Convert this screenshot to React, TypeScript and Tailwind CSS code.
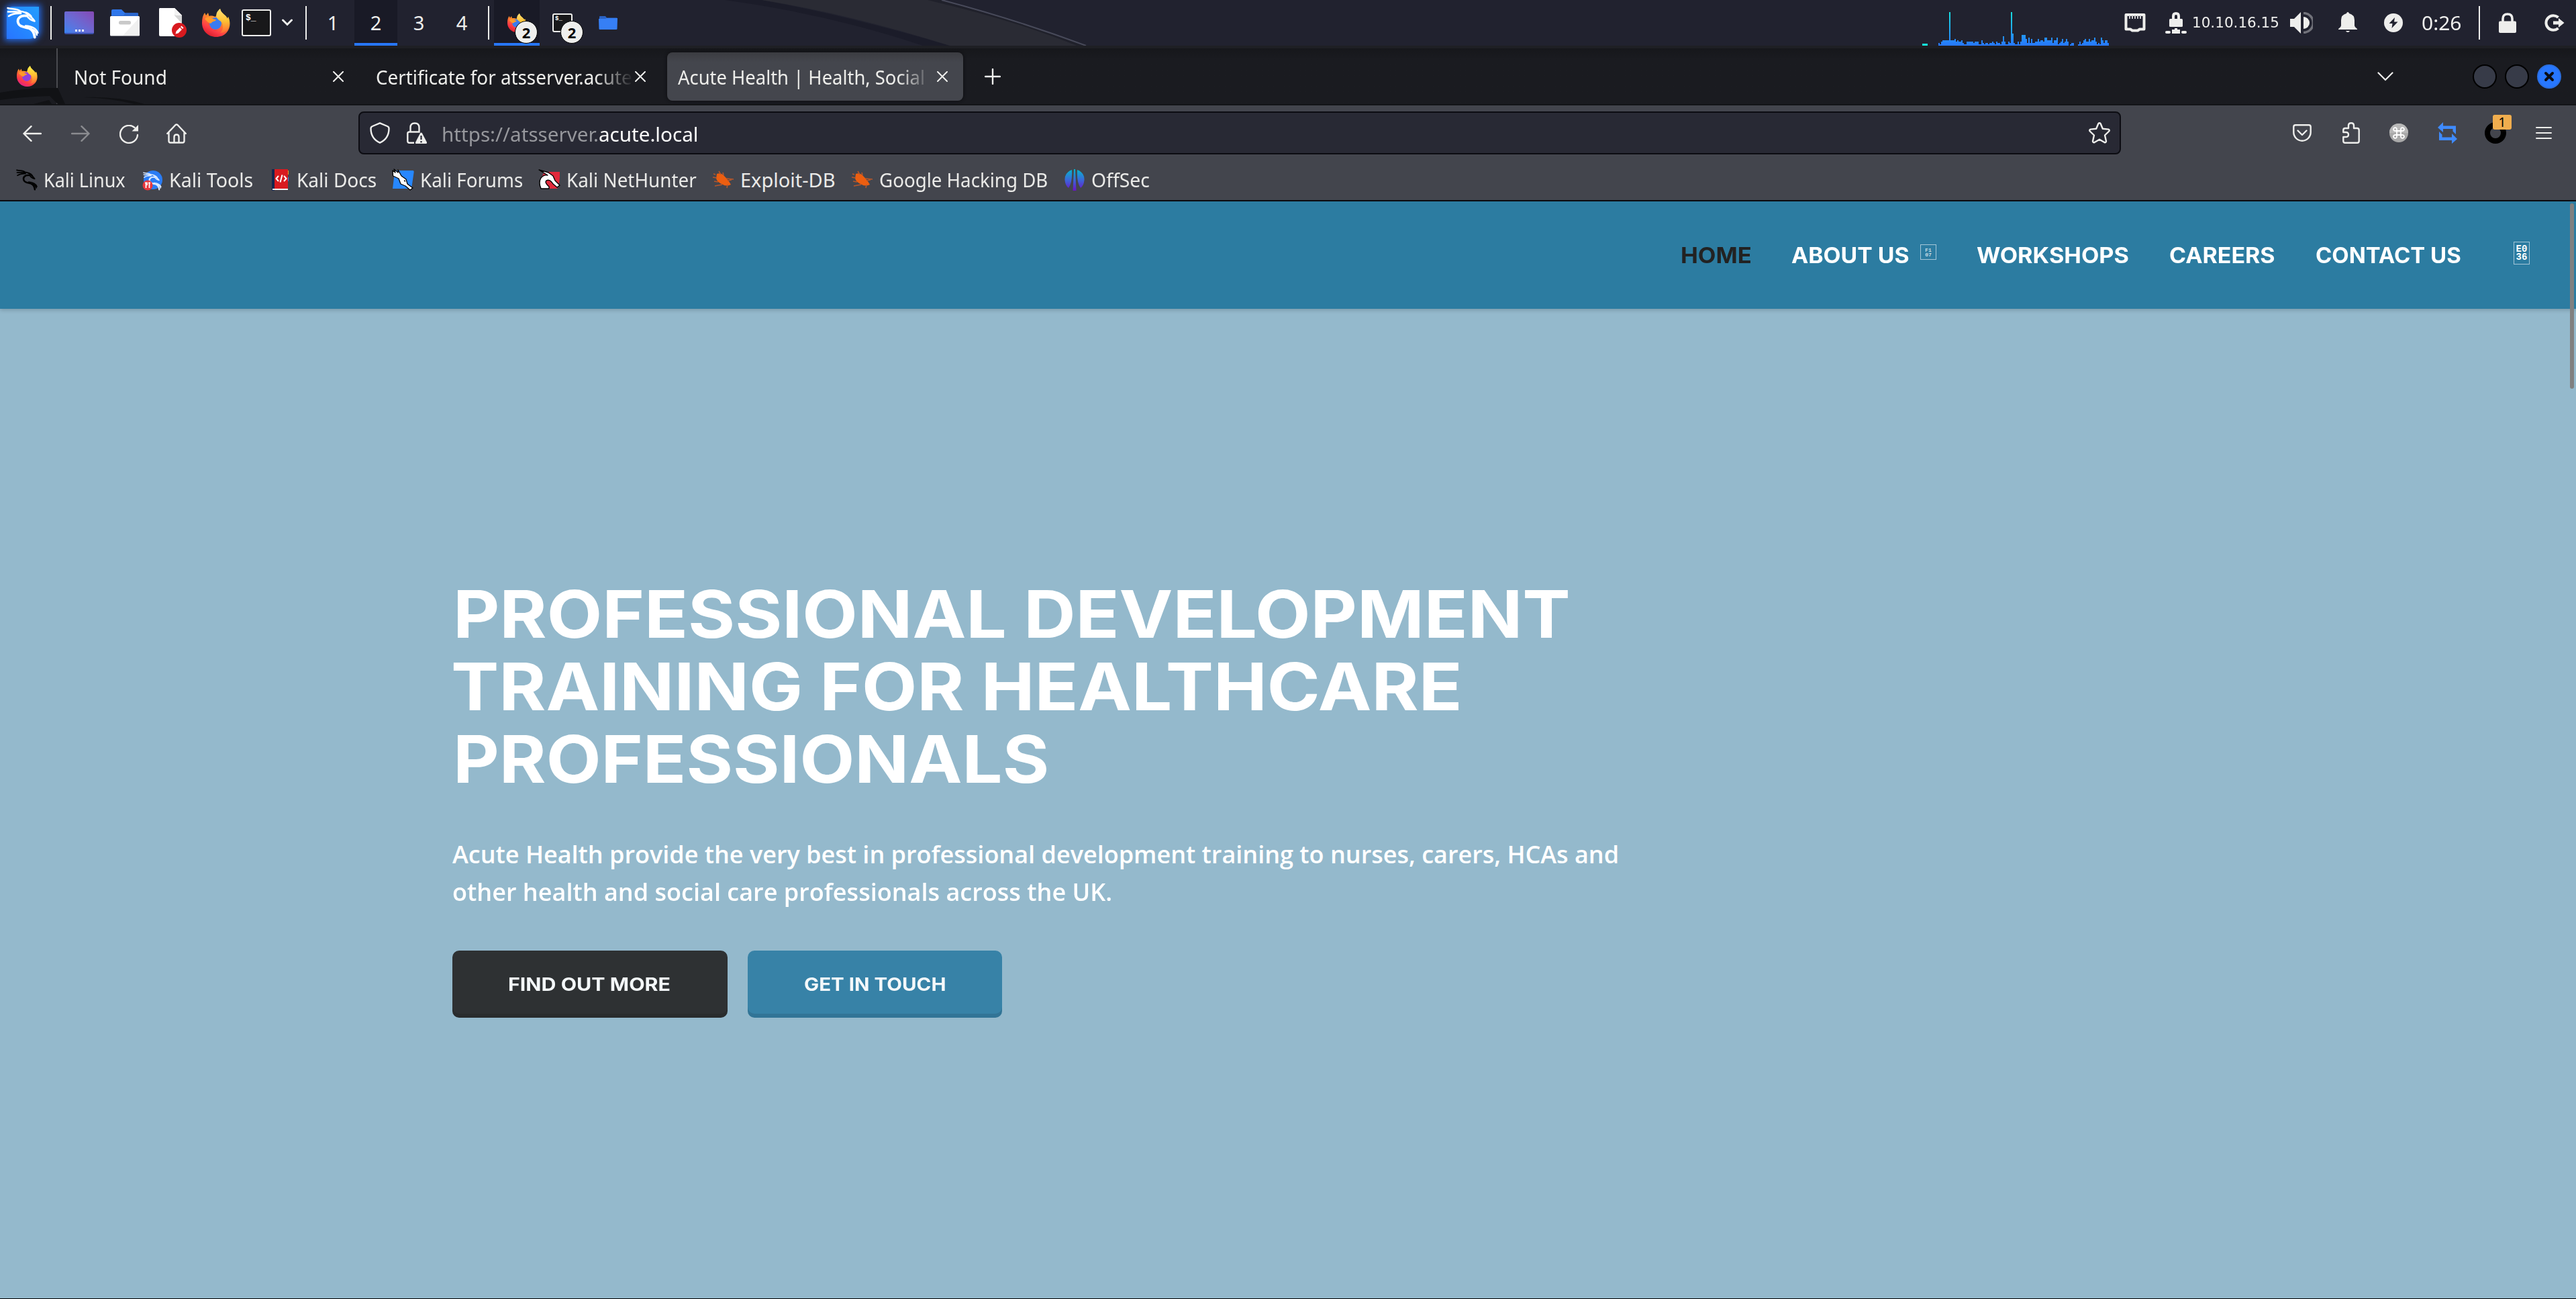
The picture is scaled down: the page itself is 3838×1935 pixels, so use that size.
import React, { useLayoutEffect, useRef, type ReactNode } from "react";

const UI = "font-['Noto_Sans',sans-serif]";
const DISPLAY = "font-['Inter',sans-serif] font-bold";

/** Single line of text stretched or condensed to fill the width of its box. */
function Fit({ className = "", children }: { className?: string; children: ReactNode }) {
  const outer = useRef<HTMLSpanElement>(null);
  const inner = useRef<HTMLSpanElement>(null);
  useLayoutEffect(() => {
    const fit = () => {
      if (!outer.current || !inner.current) return;
      const k = outer.current.clientWidth / inner.current.offsetWidth;
      inner.current.style.transform = `scaleX(${k})`;
    };
    fit();
    document.fonts?.ready.then(fit);
  }, []);
  return (
    <span ref={outer} className={`block shrink-0 whitespace-nowrap ${className}`}>
      <span ref={inner} className="inline-block origin-left">
        {children}
      </span>
    </span>
  );
}

function Dragon() {
  return (
    <g fill="none" stroke="currentColor" strokeLinecap="round" strokeLinejoin="round">
      <path strokeWidth="2.6" d="M1.500 2 C8 4 15 2.500 20 6.500 M2 7.500 C9 8 14 6 21 9 M3 14 C8 10.500 14 9.500 21 10" />
      <path strokeWidth="2.6" d="M21 7 C27 7 31 11 34 13.500 C37 16 40 18.500 41.500 21.500 C37 20.500 33 18 30 13.500 M28 8.500 C32 10 35 12 36.500 14.500" />
      <path strokeWidth="3.800" d="M29 13.500 C20 12.500 15 18 17 24 C19 30.500 27 30 33 32 C38 34 41 39 41.800 45.500" />
      <path strokeWidth="2.400" d="M28 28.500 C37 29 44 32.500 46.500 39 M36 32.500 C41 34.500 44 37 45 42" />
    </g>
  );
}

function Firefox({ id, purple, className }: { id: string; purple?: boolean; className: string }) {
  return (
    <svg viewBox="0 0 42 42" className={className}>
      <defs>
        <linearGradient id={`${id}b`} x1="0.8" y1="0.1" x2="0.3" y2="1">
          <stop offset="0" stopColor="#ffd94a" />
          <stop offset="0.4" stopColor="#ff8a2b" />
          <stop offset="0.75" stopColor="#ff3b47" />
          <stop offset="1" stopColor={purple ? "#e0208a" : "#d81e2c"} />
        </linearGradient>
        <linearGradient id={`${id}f`} x1="0.5" y1="0" x2="0.5" y2="1">
          <stop offset="0" stopColor={purple ? "#fff04a" : "#ffe07a"} />
          <stop offset="0.5" stopColor="#ffc233" />
          <stop offset="1" stopColor="#ff6a36" />
        </linearGradient>
      </defs>
      <path fill={`url(#${id}b)`} d="M27 0 C28 7 36 9 38 15 L39 12 C43 20 42 29 37 35 C33 40 27 42 21 42 C9 42 0 33 0 21 C0 15 1 10 4 6 L6 10 L9 6 L10.500 11 C14 10 17 11 20 12 Z" />
      <circle cx="20" cy="22" r="9" fill={purple ? "#9040dd" : "#3a7bf0"} />
      <path fill={`url(#${id}f)`} d="M27 0 C28 7 36 9 38 15 L39 12 C42 20 41 28 36 33 C33 35 30 36 27 36 C33 31 32 22 27 18 C21 15 18 7 27 0 Z" />
      <path fill="#ff9a2b" d="M4 15 C8 11 13 12 16 15 L21 16.500 C20 19 16 18.500 14.500 20.500 C13 23 10 22 4 15 Z" />
    </svg>
  );
}

function Terminal({ className }: { className: string }) {
  return (
    <div className={`rounded-[3px] border-2 border-[#f0f0ee] bg-[#18181a] font-bold leading-none text-white font-['Liberation_Mono',monospace] ${className}`}>
      $_
    </div>
  );
}

function Bar({ className }: { className: string }) {
  return <div className={`h-[50px] w-[2px] shrink-0 bg-[#eeeeec] ${className}`} />;
}

const LOAD = [
  2, 1, 3, 4, 4, 4, 4, 4, 25, 4, 4, 4, 5, 3, 4, 3, 3, 4, 2, 1, 1, 3, 3, 3, 3, 3, 2, 3, 3, 3, 1, 1, 4, 2, 1, 2, 2, 1, 2, 2,
  3, 2, 1, 3, 2, 2, 1, 3, 7, 3, 1, 1, 3, 2, 25, 9, 2, 1, 1, 3, 1, 3, 8, 8, 8, 5, 2, 6, 2, 5, 2, 2, 3, 3, 5, 3, 4, 4, 3, 6,
  6, 4, 4, 4, 6, 2, 4, 4, 6, 1, 2, 3, 5, 2, 3, 5, 3, 0, 1, 2, 2, 0, 0, 0, 1, 3, 1, 2, 4, 5, 3, 3, 5, 3, 4, 4, 6, 3, 1, 2,
  1, 6, 4, 2, 4, 4, 2,
];

function LoadGraph() {
  return (
    <svg viewBox="0 0 280 68" className="h-[68px] w-[280px] shrink-0" shapeRendering="crispEdges">
      <defs>
        <linearGradient id="load" gradientUnits="userSpaceOnUse" x1="0" y1="68" x2="0" y2="18">
          <stop offset="0" stopColor="#2777ff" />
          <stop offset="1" stopColor="#18dfe0" />
        </linearGradient>
      </defs>
      <rect x="0" y="65" width="8" height="3" fill="#16f2dc" />
      {LOAD.map((v, i) => (
        <rect key={i} x={24 + i * 2} y={68 - v * 2} width="2" height={v * 2} fill="url(#load)" />
      ))}
    </svg>
  );
}

function Badge({ className }: { className: string }) {
  return (
    <span className={`absolute flex size-[34px] items-center justify-center rounded-full border border-black bg-[#eeeeec] text-[22px] font-bold leading-none text-black font-['Noto_Sans',sans-serif] ${className}`}>
      2
    </span>
  );
}

function Panel() {
  return (
    <div className={`relative flex h-[68px] shrink-0 items-center bg-[#21222f] text-[29px] text-[#eeeeec] ${UI}`}>
      <svg viewBox="0 0 600 68" className="absolute left-[1060px] top-0 h-[68px] w-[600px]">
        <path d="M20 0 H75 Q210 25 355 68 H315 Q170 20 20 0Z" fill="#1b1c29" />
        <path d="M75 0 H340 Q450 30 545 68 H355 Q210 22 75 0Z" fill="#2a2b34" />
        <path d="M322 0 H343 Q470 36 557 68 H545 Q450 30 322 0Z" fill="#20212b" />
        <path d="M343 0 Q450 28 558 68" fill="none" stroke="#484a5a" strokeWidth="2" />
      </svg>
      <div className="ml-[10px] size-12 shrink-0 rounded-br-[14px] rounded-tl-[8px] bg-linear-to-tr from-[#2874ff] to-[#249dff] text-white shadow-[0_0_10px_3px_#2467e0]">
        <svg viewBox="0 0 48 48" className="size-12 overflow-visible">
          <Dragon />
        </svg>
      </div>
      <Bar className="ml-[17px]" />
      <div className="ml-[19px] flex h-[34px] w-11 shrink-0 items-end justify-center gap-[2px] rounded-[2px] border-b-2 border-[#3b50ac] bg-linear-to-tr from-[#3584f0] to-[#8548b4] pb-[2px]">
        <i className="size-[3px] bg-white" />
        <i className="size-[3px] bg-white" />
        <i className="size-[3px] bg-white" />
      </div>
      <svg viewBox="0 0 44 40" className="ml-6 h-10 w-11 shrink-0">
        <path d="M2 12 V2 Q2 0 4 0 H17 L22 5 H40 Q42 5 42 7 V12Z" fill="#2f76ea" />
        <path d="M2 12 V9 H20 L23 5 H40 Q42 5 42 7 V12Z" fill="#2a66cc" />
        <rect y="10" width="44" height="29.500" rx="1.500" fill="#fff" />
        <path d="M44 12 V39 H19Z" fill="#f0f0f0" />
        <rect x="13" y="17" width="18" height="5.500" rx="2.500" fill="#c9c9c9" />
      </svg>
      <svg viewBox="0 0 42 44" className="ml-[29px] h-11 w-[42px] shrink-0">
        <path d="M1 0 H23 L34 11 V42 H2 Q0 42 0 40 V1Z" fill="#fff" />
        <path d="M23 0 L34 11 V23 L23 11Z" fill="#d5d5d5" />
        <path d="M23 0 L34 11 H25 Q23 11 23 9Z" fill="#f3f3f3" />
        <circle cx="30" cy="33" r="11" fill="#d81a1f" />
        <path d="M24.500 38.500 L25.500 34.500 L31 29 L34 32 L28.500 37.500Z M32 28 L33.500 26.500 L36.500 29.500 L35 31Z" fill="#fff" />
      </svg>
      <Firefox id="pf" className="ml-[22px] size-[42px] shrink-0" />
      <Terminal className="ml-[17px] h-10 w-11 shrink-0 pl-[4px] pt-[4px] text-[13px]" />
      <svg viewBox="0 0 16 12" className="ml-4 h-3 w-4 shrink-0">
        <path d="M1.500 2 L8 8.500 L14.500 2" fill="none" stroke="#eeeeec" strokeWidth="3" strokeLinecap="round" />
      </svg>
      <Bar className="ml-[19px]" />
      <div className="ml-[7px] flex h-[68px] shrink-0 leading-[68px]">
        <span className="w-16 text-center">1</span>
        <span className="w-16 border-b-4 border-[#2777ff] bg-[#191a26] text-center">2</span>
        <span className="w-16 text-center">3</span>
        <span className="w-16 text-center">4</span>
      </div>
      <Bar className="ml-[7px]" />
      <div className="relative ml-[7px] flex h-[68px] w-[68px] shrink-0 items-center border-b-4 border-[#2777ff] bg-[#191a26] pl-5 pt-1">
        <Firefox id="tf" className="size-7" />
        <Badge className="left-[31px] top-[31px]" />
      </div>
      <div className="relative flex h-[68px] w-[68px] shrink-0 items-center pl-[19px]">
        <Terminal className="h-[28px] w-[30px] pl-[2px] pt-[2px] text-[9px]" />
        <Badge className="left-[31px] top-[31px]" />
      </div>
      <svg viewBox="0 0 28 20" className="ml-5 h-5 w-7 shrink-0">
        <path d="M1 5 V1 Q1 0 2 0 H10 L12 2.500 H27 V6Z" fill="#2a62c4" />
        <path d="M0 4 H10 L12 3 H28 L27.500 19 Q27.500 20 26 20 H2 Q.5 20 .5 19Z" fill="#367ff5" />
      </svg>

      <div className="ml-auto flex items-center">
        <LoadGraph />
        <svg viewBox="0 0 32 28" className="ml-[21px] h-7 w-8 shrink-0">
          <path d="M2.500 2 H29.500 V23.500 H23 L20 25.500 H12 L9 23.500 H2.500Z" fill="none" stroke="#eeeeec" strokeWidth="4" strokeLinejoin="round" />
          <path d="M8 3 V8 M12 3 V8 M16 3 V8 M20 3 V8 M24 3 V8" stroke="#c9c9cc" strokeWidth="2" />
        </svg>
        <svg viewBox="0 0 32 32" className="ml-[29px] size-8 shrink-0" fill="#eeeeec">
          <path d="M12 11 V6 Q12 2 16 2 Q20 2 20 6 V11" fill="none" stroke="#eeeeec" strokeWidth="4" />
          <rect x="6" y="10" width="20" height="12" rx="1.500" />
          <path d="M14 24 H18 V26 H22 V32 H10 V26 H14Z" />
          <rect y="28" width="8" height="4" rx="2" />
          <rect x="24" y="28" width="8" height="4" rx="2" />
        </svg>
        <Fit className="ml-[8px] w-[130px] text-[22px] leading-[62px] font-['DejaVu_Sans',sans-serif]">10.10.16.15</Fit>
        <svg viewBox="0 0 34 32" className="ml-[16px] h-8 w-[34px] shrink-0">
          <path d="M0 10 H6 L16 0 V32 L6 22 H0Z" fill="#eeeeec" />
          <path d="M20 1.500 A14.500 14.500 0 0 1 20 30.500" fill="none" stroke="#71727a" strokeWidth="3.500" />
          <path d="M20 7 A9 9 0 0 1 20 25Z" fill="#eeeeec" />
        </svg>
        <svg viewBox="0 0 28 32" className="ml-[38px] h-8 w-7 shrink-0" fill="#eeeeec">
          <path d="M14 0 Q15.500 0 16 2 Q24 4 24 12 V20 Q24 22 28 25 V26 H0 V25 Q4 22 4 20 V12 Q4 4 12 2 Q12.500 0 14 0Z" />
          <path d="M11 28 H17 Q16 30 14 30 Q12 30 11 28Z" />
        </svg>
        <svg viewBox="0 0 28 28" className="ml-10 size-7 shrink-0">
          <circle cx="14" cy="14" r="14" fill="#eeeeec" />
          <path d="M16 6 L7.500 15 H12.500 L11.500 22 L20.500 12.500 H15Z" fill="#21222f" />
        </svg>
        <Fit className="ml-[28px] w-[60px]">0:26</Fit>
        <Bar className="ml-[25px]" />
        <svg viewBox="0 0 26 30" className="ml-7 h-[30px] w-[26px] shrink-0">
          <path d="M6 14 V9 Q6 2 13 2 Q20 2 20 9 V14" fill="none" stroke="#eeeeec" strokeWidth="3.600" />
          <rect y="12.500" width="26" height="17.500" rx="2" fill="#eeeeec" />
        </svg>
        <svg viewBox="0 0 30 26" className="ml-[42px] mr-[17px] h-[26px] w-[30px] shrink-0">
          <path d="M20.500 5 A10.800 10.800 0 1 0 20.500 21" fill="none" stroke="#eeeeec" strokeWidth="4" />
          <path d="M13 10.500 H21 V6 L29.500 13 L21 20 V15.500 H13Z" fill="#eeeeec" />
        </svg>
      </div>
    </div>
  );
}

function Close({ className }: { className: string }) {
  return (
    <svg viewBox="0 0 16 16" className={`size-4 shrink-0 ${className}`}>
      <path d="M1 1 L15 15 M15 1 L1 15" stroke="#f0f0ee" strokeWidth="2" strokeLinecap="round" />
    </svg>
  );
}

function TabBar() {
  return (
    <div className={`relative flex h-[89px] shrink-0 items-center border-b-2 border-t-4 border-b-[#131417] border-t-[#1e1f24] bg-linear-to-b from-[#16171b] via-[#1a1b20] via-20% to-[#1a1b20] text-[29px] text-[#ededea] ${UI}`}>
      <svg viewBox="0 0 240 24" className="absolute bottom-0 left-0 h-6 w-[240px]">
        <path d="M0 7 Q45 -1 86 0 L97 24 H86 L74 12 Q35 13 0 18Z" fill="#111215" />
        <path d="M50 24 L73 18 L77 24Z" fill="#111215" />
        <path d="M124 14 Q175 12 215 24 H200 Q165 15 124 14Z" fill="#111215" />
      </svg>
      <Firefox id="bf" purple className="ml-[25px] size-[31px] shrink-0" />
      <div className="ml-[28px] h-full w-[2px] shrink-0 bg-[#4a4b50]" />
      <Fit className="ml-[24px] mt-[2px] w-[139px]">Not Found</Fit>
      <Close className="ml-[247px]" />
      <div className="ml-[48px] mt-[2px] w-[384px] shrink-0 overflow-hidden mask-r-from-85% mask-r-to-100%">
        <Fit className="w-[382px]">Certificate for atsserver.acute</Fit>
      </div>
      <Close className="ml-[2px]" />
      <div className="ml-[32px] flex h-[72px] w-[441px] shrink-0 items-center rounded-[8px] bg-linear-to-b from-[#3b3c41] to-[#44464d] to-20% shadow-[0_0_5px_#0c0c0f]">
        <div className="ml-[16px] mt-[2px] w-[386px] shrink-0 overflow-hidden mask-r-from-85% mask-r-to-98%">
          <Fit className="w-[391px]">Acute Health | Health, Social a</Fit>
        </div>
        <Close className="" />
      </div>
      <svg viewBox="0 0 24 24" className="ml-[32px] size-6 shrink-0">
        <path d="M12 1 V23 M1 12 H23" stroke="#f0f0ee" strokeWidth="2.400" strokeLinecap="round" />
      </svg>
      <svg viewBox="0 0 24 14" className="ml-auto h-[14px] w-6 shrink-0">
        <path d="M1.500 1.500 L12 12 L22.500 1.500" fill="none" stroke="#f0f0ee" strokeWidth="2.200" strokeLinecap="round" />
      </svg>
      <div className="ml-[118px] size-9 shrink-0 rounded-full border-2 border-black bg-[#373b48]" />
      <div className="ml-3 size-9 shrink-0 rounded-full border-2 border-black bg-[#373b48]" />
      <div className="ml-3 mr-[22px] flex size-9 shrink-0 items-center justify-center rounded-full border-2 border-[#2b6fe0] bg-[#2777ff]">
        <svg viewBox="0 0 16 16" className="size-4">
          <path d="M3 3 L13 13 M13 3 L3 13" stroke="#0b0d14" strokeWidth="4" strokeLinecap="round" />
        </svg>
      </div>
    </div>
  );
}

function Toolbar() {
  return (
    <div className={`flex h-[82px] shrink-0 items-center text-[29px] text-[#eeeeec] ${UI}`}>
      <svg viewBox="0 0 28 24" className="ml-[34px] mt-[2px] h-6 w-7 shrink-0" fill="none" stroke="#eeeeec" strokeWidth="2.400" strokeLinecap="round" strokeLinejoin="round">
        <path d="M12.500 1.200 L1.500 12 L12.500 22.800 M1.500 12 H27" />
      </svg>
      <svg viewBox="0 0 28 24" className="ml-[44px] mt-[2px] h-6 w-7 shrink-0" fill="none" stroke="#8b8c90" strokeWidth="2.400" strokeLinecap="round" strokeLinejoin="round">
        <path d="M15.500 1.200 L26.500 12 L15.500 22.800 M26.500 12 H1" />
      </svg>
      <svg viewBox="0 0 28 28" className="ml-[44px] mt-1 size-7 shrink-0">
        <path d="M22.500 4 A13 13 0 1 0 27 15" fill="none" stroke="#eeeeec" strokeWidth="2.400" strokeLinecap="round" />
        <path d="M28 0 V9.500 H18.500Z" fill="#eeeeec" />
      </svg>
      <svg viewBox="0 0 30 30" className="ml-[42px] mt-[2px] size-[30px] shrink-0" fill="none" stroke="#eeeeec" strokeWidth="2.400" strokeLinecap="round" strokeLinejoin="round">
        <path d="M1.200 15 L13.500 2 Q15 .8 16.500 2 L28.800 15 M3.500 13 V26 Q3.500 28.500 6 28.500 H24 Q26.500 28.500 26.500 26 V13 M11.500 28.500 V20 Q11.500 16.500 15 16.500 Q18.500 16.500 18.500 20 V28.500" />
      </svg>
      <div className="ml-[256px] flex h-16 w-[2626px] shrink-0 items-center rounded-[8px] border-2 border-[#0c0c12] bg-[#282934]">
        <svg viewBox="0 0 30 32" className="ml-[15px] h-8 w-[30px] shrink-0" fill="none" stroke="#eeeeec" strokeWidth="2.400" strokeLinejoin="round">
          <path d="M15 1.300 L26 6 Q28.500 7 28.500 9.500 C28.500 19 24 26.500 15 30.700 C6 26.500 1.500 19 1.500 9.500 Q1.500 7 4 6Z" />
        </svg>
        <svg viewBox="0 0 30 32" className="ml-[25px] h-8 w-[30px] shrink-0">
          <path d="M5.500 14 V8 Q5.500 1.500 12 1.500 Q18.500 1.500 18.500 8 V14.500 H4 Q1.300 14.500 1.300 17 V28 Q1.300 30.700 4 30.700 H11" fill="none" stroke="#eeeeec" strokeWidth="2.400" />
          <path d="M20 16.500 Q21.500 14.500 23 16.500 L30 30 Q30.500 32 28.500 32 H14 Q12.500 32 13 30Z" fill="#eeeeec" />
          <path d="M21.500 20 V26 M21.500 28 V30.500" stroke="#282934" strokeWidth="2.200" />
        </svg>
        <Fit className="ml-[22px] mt-[3px] w-[382px] text-[#96979c]">
          https://atsserver.<span className="text-[#fbfbfb]">acute.local</span>
        </Fit>
        <svg viewBox="0 0 32 32" className="ml-auto mr-[14px] size-8 shrink-0" fill="none" stroke="#eeeeec" strokeWidth="2.400" strokeLinejoin="round">
          <path d="M14.300 2.300 Q16 .2 17.700 2.300 L20.800 9.800 L29.300 10.600 Q31.600 11.500 30.200 13.500 L24 19.500 L26 28.300 Q25.700 30.800 23.300 30 L16 25.800 L8.700 30 Q6.300 30.800 6 28.300 L8 19.500 L1.800 13.500 Q.4 11.500 2.700 10.600 L11.200 9.800Z" />
        </svg>
      </div>
      <svg viewBox="0 0 28 26" className="ml-auto h-[26px] w-7 shrink-0" fill="none" stroke="#eeeeec" strokeWidth="2.400" strokeLinecap="round" strokeLinejoin="round">
        <path d="M4 1.300 H24 Q26.700 1.300 26.700 4 V12 A12.700 12.700 0 0 1 1.300 12 V4 Q1.300 1.300 4 1.300Z M7.500 9.500 L14 16 L20.500 9.500" />
      </svg>
      <svg viewBox="0 0 26 32" className="ml-[46px] h-8 w-[26px] shrink-0" fill="none" stroke="#eeeeec" strokeWidth="2.400" strokeLinejoin="round">
        <path d="M9 9 V5 Q9 1.300 13 1.300 Q17 1.300 17 5 V9 H22 Q24.700 9 24.700 12 V28 Q24.700 30.700 22 30.700 H4 Q1.300 30.700 1.300 28 V22 H5 Q9 22 9 18.500 Q9 15 5 15 H1.300 V12 Q1.300 9 4 9Z" />
      </svg>
      <svg viewBox="0 0 28 28" className="ml-[44px] size-7 shrink-0">
        <circle cx="14" cy="14" r="14" fill="#a9a9a9" />
        <path d="M0 14 A14 14 0 0 1 28 14Z" fill="#b8b8b8" />
        <path d="M11 11 H17 V17 H11Z M11 11 H9 A2.500 2.500 0 1 1 11 9Z M17 11 V9 A2.500 2.500 0 1 1 19 11Z M11 17 V19 A2.500 2.500 0 1 1 9 17Z M17 17 H19 A2.500 2.500 0 1 1 17 19Z" fill="none" stroke="#fff" strokeWidth="1.800" />
      </svg>
      <svg viewBox="0 0 30 32" className="ml-[44px] h-8 w-[30px] shrink-0" fill="#3f8bff">
        <path d="M0 8 L8 0 V5.500 H27 V18 L22.500 13.500 V10 H8 V15Z" />
        <path d="M29 25 L21 32 V27 H2 V14 L6.500 18.500 V22.500 H21 V17Z" />
      </svg>
      <div className="relative ml-[40px] size-8 shrink-0 rounded-full border-[8px] border-black">
        <span className="absolute left-[4px] top-[-19px] flex h-[22px] w-7 items-center justify-center rounded-[3px] bg-[#f0ad4e] text-[20px] leading-none text-black">1</span>
      </div>
      <div className="ml-[44px] mr-[36px] flex w-6 shrink-0 flex-col gap-[6px]">
        <i className="h-[2px] rounded bg-[#eeeeec]" />
        <i className="h-[2px] rounded bg-[#eeeeec]" />
        <i className="h-[2px] rounded bg-[#eeeeec]" />
      </div>
    </div>
  );
}

function Bug() {
  return (
    <g>
      <path d="M6 7 Q12 5 16 9 Q20 13 24 18 L27 23 Q20 26 15 23 Q7 20 5 14Z" fill="#ec5e10" />
      <path d="M12 8 L9 3 M16 9 L15 5 M20 14 L31 15 M22 17 L28 16 M6 13 L0 12 M8 19 L2 18 M14 23 L3 25 M22 23 L21 28 M4 8 L1 7" stroke="#b9572a" strokeWidth="1.500" />
    </g>
  );
}

const BOOKMARKS: { label: string; width: string; icon: ReactNode }[] = [
  {
    label: "Kali Linux",
    width: "w-[122px]",
    icon: (
      <g transform="scale(.667)" className="text-black">
        <Dragon />
      </g>
    ),
  },
  {
    label: "Kali Tools",
    width: "w-[125px]",
    icon: (
      <>
        <circle cx="17" cy="16" r="14" fill="#2a7cf5" />
        <g transform="translate(2 4) scale(.58)" className="text-[#dbe9ff]">
          <Dragon />
        </g>
        <circle cx="9" cy="24" r="7.500" fill="#e8373c" />
        <path d="M5 20.500 H8 V24 M6.500 20.500 V28 M10 20.500 H13 M11.500 20.500 V28" stroke="#fff" strokeWidth="1.800" />
      </>
    ),
  },
  {
    label: "Kali Docs",
    width: "w-[119px]",
    icon: (
      <>
        <rect x="4" width="4" height="32" fill="#14264f" />
        <rect x="8" width="20" height="29" fill="#d81a1f" />
        <rect x="5" y="29" width="23" height="2" fill="#f2f2f2" />
        <rect x="28" y="2" width="1" height="6" fill="#e8a020" />
        <rect x="28" y="12" width="1" height="6" fill="#3a7bf0" />
        <path d="M14 10 L10.500 14 L14 18 M22 10 L25.500 14 L22 18 M19.500 8.500 L16.500 19.500" fill="none" stroke="#fff" strokeWidth="2" />
      </>
    ),
  },
  {
    label: "Kali Forums",
    width: "w-[153px]",
    icon: (
      <>
        <path d="M4 2 H30 Q32 2 31.700 4 L28.500 26 Q28 29 25 29 H0 L3 4Z" fill="#2787ff" />
        <path d="M.5 10 L0 2 L4 5 L2 0 L8 5 L8 1 L13 10 L20 15 L22 22 L30 28 L26 31 L19 25 L12 22 L9 14Z" fill="#fff" stroke="#000" strokeWidth="1.300" strokeLinejoin="round" />
        <path d="M17 17 L19 18" stroke="#000" strokeWidth="1.500" />
      </>
    ),
  },
  {
    label: "Kali NetHunter",
    width: "w-[194px]",
    icon: (
      <>
        <path d="M8 4 H31 Q31.500 22 27 29 H2 Q.5 16 6 8Z" fill="#e22a3c" />
        <path d="M0 1 L14 5 L21 10 L24 17 L31 24 L27 27 L21 22 Q16 14 11 17 Q8 20 15 26 L15 29 H3 Q-1 20 3 13 Q7 8 13 9 Z" fill="#fff" stroke="#000" strokeWidth="1.400" strokeLinejoin="round" />
      </>
    ),
  },
  { label: "Exploit-DB", width: "w-[142px]", icon: <Bug /> },
  { label: "Google Hacking DB", width: "w-[251px]", icon: <Bug /> },
  {
    label: "OffSec",
    width: "w-[87px]",
    icon: (
      <>
        <defs>
          <linearGradient id="ofs" x1="0" y1="0" x2="0" y2="32" gradientUnits="userSpaceOnUse">
            <stop offset="0" stopColor="#04b8cc" />
            <stop offset="0.5" stopColor="#3a68d8" />
            <stop offset="1" stopColor="#6a12c8" />
          </linearGradient>
        </defs>
        <path d="M12 1 Q1 5 1.500 16 Q2 24 7 28 Q13 20 12 1Z M20 1 Q31 5 30.500 16 Q30 24 25 28 Q19 20 20 1Z M15 0 H17 L18.500 32 H13.500Z" fill="url(#ofs)" />
      </>
    ),
  },
];

function BookmarksBar() {
  return (
    <div className={`flex h-[58px] shrink-0 items-center gap-6 pl-6 text-[29px] text-[#eaeae8] ${UI}`}>
      {BOOKMARKS.map((b) => (
        <div key={b.label} className="flex shrink-0 items-center gap-[9px]">
          <svg viewBox="0 0 32 32" className="size-8 shrink-0 overflow-visible">
            {b.icon}
          </svg>
          <Fit className={b.width}>{b.label}</Fit>
        </div>
      ))}
    </div>
  );
}

function SiteHeader() {
  return (
    <div className={`relative z-10 flex h-40 shrink-0 items-center bg-[#2c7ca1] pl-[2504px] text-[32px] text-white shadow-[0_2px_6px_rgba(0,0,0,0.18)] ${DISPLAY}`}>
      <Fit className="mt-[2px] w-[106px] text-[#222]">HOME</Fit>
      <Fit className="ml-[59px] mt-[2px] w-[175px]">ABOUT US</Fit>
      <span className="ml-[17px] mb-[9px] flex h-[23px] w-6 shrink-0 flex-col items-center justify-center border border-[#a5c7d8] text-[8px] font-normal leading-[7px] font-['Liberation_Mono',monospace]">
        <span>F1</span>
        <span>07</span>
      </span>
      <Fit className="ml-[60px] mt-[2px] w-[227px]">WORKSHOPS</Fit>
      <Fit className="ml-[60px] mt-[2px] w-[158px]">CAREERS</Fit>
      <Fit className="ml-[60px] mt-[2px] w-[217px]">CONTACT US</Fit>
      <span className="ml-[78px] mb-[7px] flex h-[34px] w-6 shrink-0 flex-col items-center justify-center border border-[#a5c7d8] text-[14px] leading-[12px] font-['Liberation_Mono',monospace]">
        <span>E0</span>
        <span>36</span>
      </span>
    </div>
  );
}

function Hero() {
  return (
    <div className="grow border-b border-black bg-[#94b9cc] pl-[674px] pt-[401px] text-white">
      <h1 className={`text-[98px] leading-[108px] ${DISPLAY}`}>
        <Fit className="ml-px w-[1665px]">PROFESSIONAL DEVELOPMENT</Fit>
        <Fit className="ml-[-2px] w-[1507px]">TRAINING FOR HEALTHCARE</Fit>
        <Fit className="ml-px w-[888px]">PROFESSIONALS</Fit>
      </h1>
      <div className="mt-[60px] text-[36px] font-semibold leading-[56px] font-['Open_Sans',sans-serif]">
        <Fit className="w-[1738px]">Acute Health provide the very best in professional development training to nurses, carers, HCAs and</Fit>
        <Fit className="w-[983px]">other health and social care professionals across the UK.</Fit>
      </div>
      <div className={`mt-[59px] flex gap-[30px] text-[27px] leading-[102px] text-[#f4f8fa] ${DISPLAY}`}>
        <div className="h-[100px] w-[410px] rounded-[10px] bg-[#2e3133] pl-[83px] shadow-[inset_0_-6px_0_rgba(0,0,0,0.1)]">
          <Fit className="w-[242px]">FIND OUT MORE</Fit>
        </div>
        <div className="h-[100px] w-[379px] rounded-[10px] bg-[#3782a7] pl-[84px] shadow-[inset_0_-6px_0_rgba(0,0,0,0.1)]">
          <Fit className="w-[212px]">GET IN TOUCH</Fit>
        </div>
      </div>
    </div>
  );
}

export default function App() {
  return (
    <div className="flex h-[1935px] w-[3838px] flex-col overflow-hidden bg-[#1a1b20]">
      <Panel />
      <TabBar />
      <div className="flex h-[143px] shrink-0 flex-col border-b-2 border-[#0c0c10] bg-[#43454d]">
        <Toolbar />
        <BookmarksBar />
      </div>
      <div className="relative flex grow flex-col">
        <SiteHeader />
        <Hero />
        <div className="absolute right-[3px] top-[3px] z-20 h-[276px] w-[6px] rounded-full bg-[#808080]" />
      </div>
    </div>
  );
}
